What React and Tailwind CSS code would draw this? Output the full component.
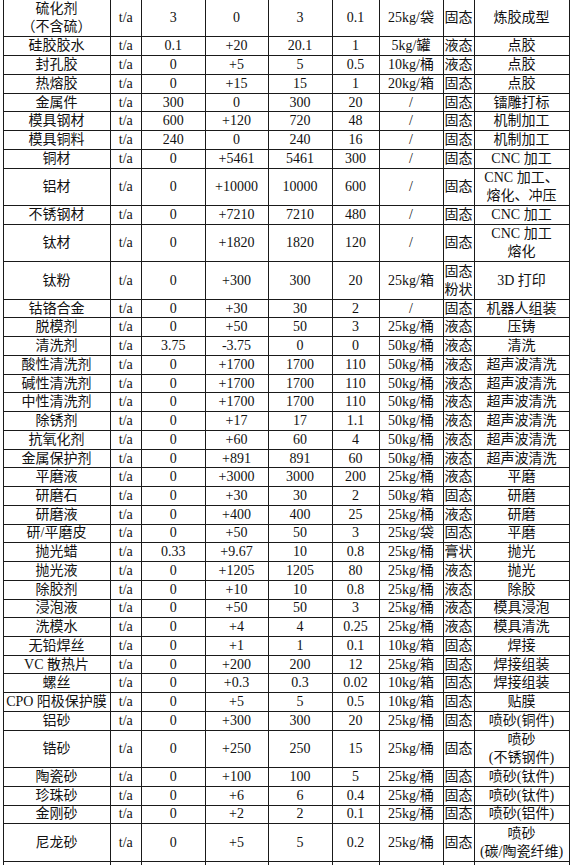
import React from 'react';

// name, unit, before, change, after, max stock, pack, state, process, tall
const rows = [
    ['硫化剂\n（不含硫）', 't/a', '3', '0', '3', '0.1', '25kg/袋', '固态', '炼胶成型', true],
    ['硅胶胶水', 't/a', '0.1', '+20', '20.1', '1', '5kg/罐', '液态', '点胶'],
    ['封孔胶', 't/a', '0', '+5', '5', '0.5', '10kg/桶', '液态', '点胶'],
    ['热熔胶', 't/a', '0', '+15', '15', '1', '20kg/箱', '固态', '点胶'],
    ['金属件', 't/a', '300', '0', '300', '20', '/', '固态', '镭雕打标'],
    ['模具钢材', 't/a', '600', '+120', '720', '48', '/', '固态', '机制加工'],
    ['模具铜料', 't/a', '240', '0', '240', '16', '/', '固态', '机制加工'],
    ['铜材', 't/a', '0', '+5461', '5461', '300', '/', '固态', 'CNC 加工'],
    ['铝材', 't/a', '0', '+10000', '10000', '600', '/', '固态', 'CNC 加工、\n熔化、冲压', true],
    ['不锈钢材', 't/a', '0', '+7210', '7210', '480', '/', '固态', 'CNC 加工'],
    ['钛材', 't/a', '0', '+1820', '1820', '120', '/', '固态', 'CNC 加工\n熔化', true],
    ['钛粉', 't/a', '0', '+300', '300', '20', '25kg/箱', '固态\n粉状', '3D 打印', true],
    ['钴铬合金', 't/a', '0', '+30', '30', '2', '/', '固态', '机器人组装'],
    ['脱模剂', 't/a', '0', '+50', '50', '3', '25kg/桶', '液态', '压铸'],
    ['清洗剂', 't/a', '3.75', '-3.75', '0', '0', '50kg/桶', '液态', '清洗'],
    ['酸性清洗剂', 't/a', '0', '+1700', '1700', '110', '50kg/桶', '液态', '超声波清洗'],
    ['碱性清洗剂', 't/a', '0', '+1700', '1700', '110', '50kg/桶', '液态', '超声波清洗'],
    ['中性清洗剂', 't/a', '0', '+1700', '1700', '110', '50kg/桶', '液态', '超声波清洗'],
    ['除锈剂', 't/a', '0', '+17', '17', '1.1', '50kg/桶', '液态', '超声波清洗'],
    ['抗氧化剂', 't/a', '0', '+60', '60', '4', '50kg/桶', '液态', '超声波清洗'],
    ['金属保护剂', 't/a', '0', '+891', '891', '60', '50kg/桶', '液态', '超声波清洗'],
    ['平磨液', 't/a', '0', '+3000', '3000', '200', '25kg/桶', '液态', '平磨'],
    ['研磨石', 't/a', '0', '+30', '30', '2', '50kg/箱', '固态', '研磨'],
    ['研磨液', 't/a', '0', '+400', '400', '25', '25kg/桶', '液态', '研磨'],
    ['研/平磨皮', 't/a', '0', '+50', '50', '3', '25kg/袋', '固态', '平磨'],
    ['抛光蜡', 't/a', '0.33', '+9.67', '10', '0.8', '25kg/桶', '膏状', '抛光'],
    ['抛光液', 't/a', '0', '+1205', '1205', '80', '25kg/桶', '液态', '抛光'],
    ['除胶剂', 't/a', '0', '+10', '10', '0.8', '25kg/桶', '液态', '除胶'],
    ['浸泡液', 't/a', '0', '+50', '50', '3', '25kg/桶', '液态', '模具浸泡'],
    ['洗模水', 't/a', '0', '+4', '4', '0.25', '25kg/桶', '液态', '模具清洗'],
    ['无铅焊丝', 't/a', '0', '+1', '1', '0.1', '10kg/箱', '固态', '焊接'],
    ['VC 散热片', 't/a', '0', '+200', '200', '12', '25kg/箱', '固态', '焊接组装'],
    ['螺丝', 't/a', '0', '+0.3', '0.3', '0.02', '10kg/箱', '固态', '焊接组装'],
    ['CPO 阳极保护膜', 't/a', '0', '+5', '5', '0.5', '10kg/箱', '固态', '贴膜'],
    ['铝砂', 't/a', '0', '+300', '300', '20', '25kg/桶', '固态', '喷砂(铜件)'],
    ['锆砂', 't/a', '0', '+250', '250', '15', '25kg/桶', '固态', '喷砂\n(不锈钢件)', true],
    ['陶瓷砂', 't/a', '0', '+100', '100', '5', '25kg/桶', '固态', '喷砂(钛件)'],
    ['珍珠砂', 't/a', '0', '+6', '6', '0.4', '25kg/桶', '固态', '喷砂(钛件)'],
    ['金刚砂', 't/a', '0', '+2', '2', '0.1', '25kg/桶', '固态', '喷砂(铝件)'],
    ['尼龙砂', 't/a', '0', '+5', '5', '0.2', '25kg/桶', '固态', '喷砂\n(碳/陶瓷纤维)', true],
    ['', '', '', '', '', '', '', '', ''],
];

const Row = ({ cells, tall }) => {
    return (
        <div className={`grid grid-cols-[107px_31.5px_63.5px_63px_64px_47px_64px_31px_95px] ${tall ? 'h-[37.48px]' : 'h-[18.74px]'}`}>
            {cells.map((c, i) => (
                <div
                    key={i}
                    className="flex items-center justify-center text-center whitespace-pre-line leading-[18px] border-r border-b border-[#1a1a1a] overflow-hidden"
                >
                    {c}
                </div>
            ))}
        </div>
    );
};

export default function App() {
    return (
        <div className="w-[572px] h-[865px] overflow-hidden bg-white">
            <div className="ml-[2.5px] w-[567px] border-l border-[#1a1a1a] text-[14px] text-[#111] font-['Liberation_Serif','Noto_Sans_CJK_SC',serif]">
                {rows.map((r, idx) => (
                    <Row key={idx} cells={r.slice(0, 9)} tall={r[9]} />
                ))}
            </div>
        </div>
    );
}
